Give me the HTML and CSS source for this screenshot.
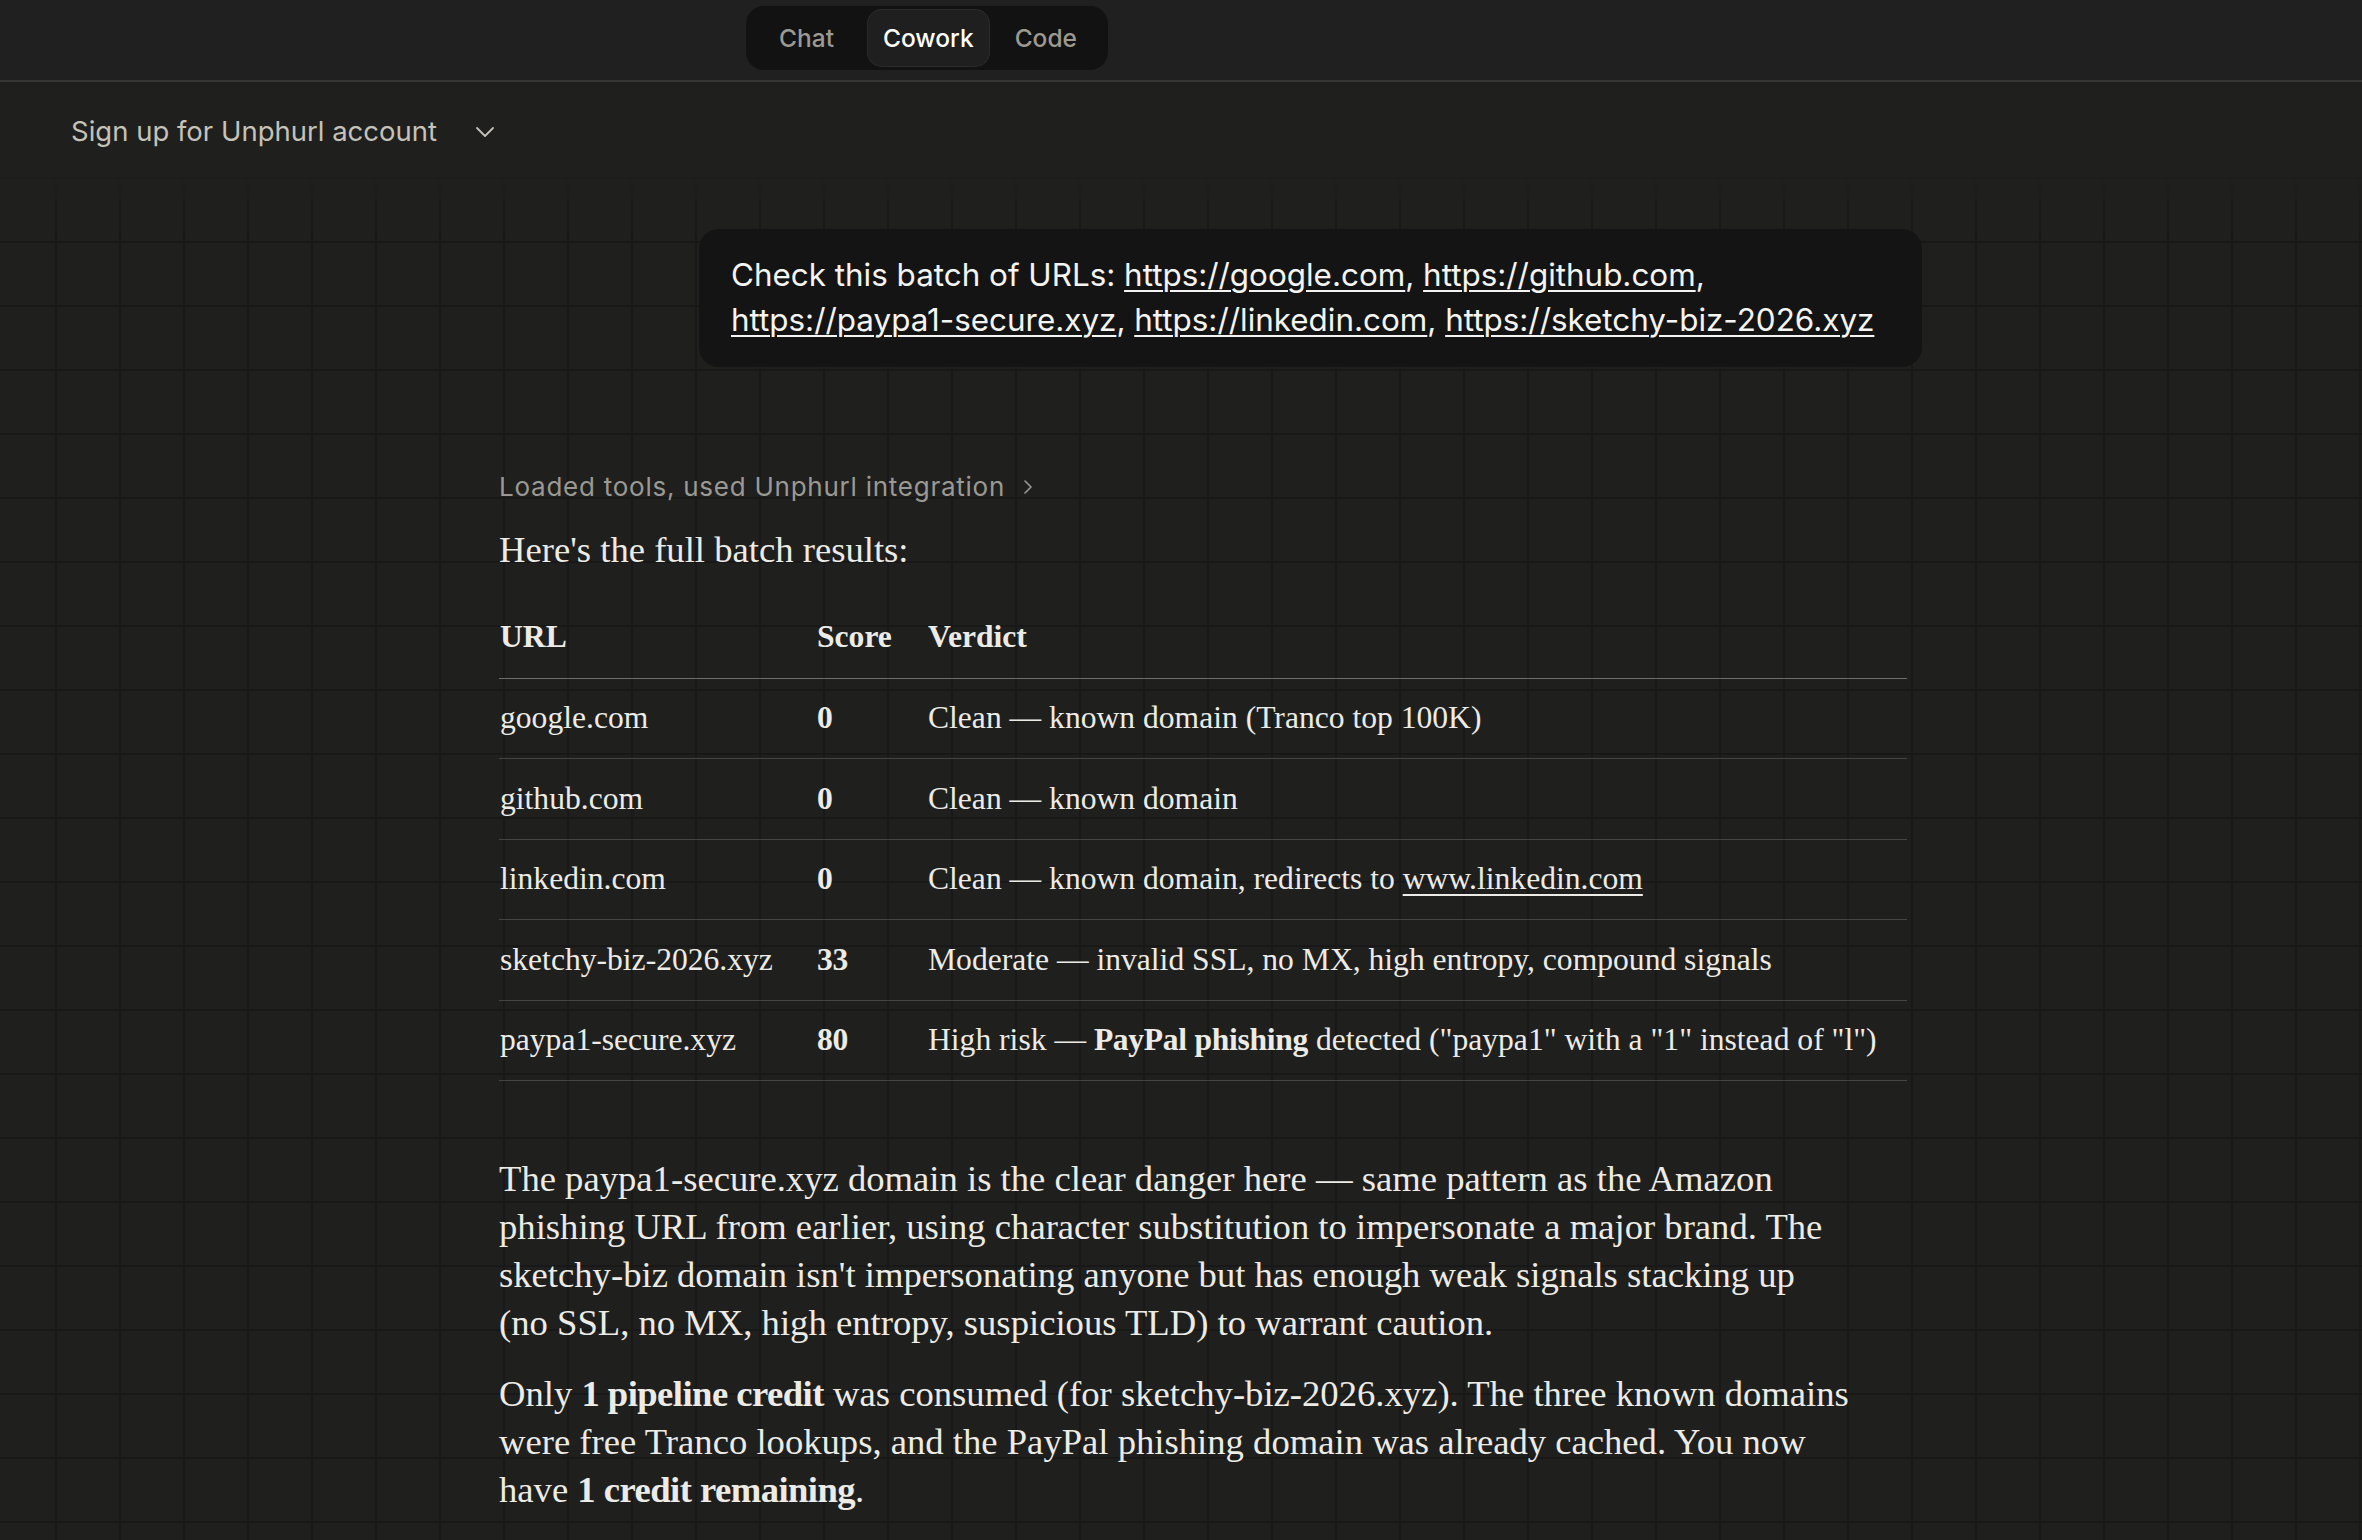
FILE: index.html
```html
<!DOCTYPE html>
<html lang="en">
<head>
<meta charset="utf-8">
<title>Sign up for Unphurl account</title>
<link rel="stylesheet" href="styles.css">
</head>
<body>
<header class="topbar">
  <nav class="mode-switch">
    <span class="mode">Chat</span>
    <span class="mode is-active">Cowork</span>
    <span class="mode">Code</span>
  </nav>
</header>

<main class="canvas">
  <div class="title-row">
    <span class="title">Sign up for Unphurl account</span>
    <svg class="title-chevron" width="20" height="12" viewBox="0 0 20 12" fill="none" stroke="currentColor" stroke-width="1.8" stroke-linecap="round" stroke-linejoin="round"><path d="M2 2l8 8 8-8"/></svg>
  </div>

  <section class="thread">
    <div class="user-msg">
      <p>Check this batch of URLs: <a href="#">https://google.com</a>, <a href="#">https://github.com</a>, <a href="#">https://paypa1-secure.xyz</a>, <a href="#">https://linkedin.com</a>, <a href="#">https://sketchy-biz-2026.xyz</a></p>
    </div>

    <div class="reply">
      <div class="tool-summary">
        <span>Loaded tools, used Unphurl integration</span>
        <svg width="10" height="16" viewBox="0 0 10 16" fill="none" stroke="currentColor" stroke-width="1.6" stroke-linecap="round" stroke-linejoin="round"><path d="M2 2l6 6-6 6"/></svg>
      </div>

      <p class="reply-text">Here's the full batch results:</p>

      <table class="results">
        <colgroup>
          <col class="col-url">
          <col class="col-score">
          <col>
        </colgroup>
        <thead>
          <tr><th>URL</th><th>Score</th><th>Verdict</th></tr>
        </thead>
        <tbody>
          <tr><td>google.com</td><td><strong>0</strong></td><td>Clean — known domain (Tranco top 100K)</td></tr>
          <tr><td>github.com</td><td><strong>0</strong></td><td>Clean — known domain</td></tr>
          <tr><td>linkedin.com</td><td><strong>0</strong></td><td>Clean — known domain, redirects to <a href="#">www.linkedin.com</a></td></tr>
          <tr><td>sketchy-biz-2026.xyz</td><td><strong>33</strong></td><td>Moderate — invalid SSL, no MX, high entropy, compound signals</td></tr>
          <tr><td>paypa1-secure.xyz</td><td><strong>80</strong></td><td>High risk — <strong>PayPal phishing</strong> detected ("paypa1" with a "1" instead of "l")</td></tr>
        </tbody>
      </table>

      <p class="reply-text summary">The paypa1-secure.xyz domain is the clear danger here — same pattern as the Amazon phishing URL from earlier, using character substitution to impersonate a major brand. The sketchy-biz domain isn't impersonating anyone but has enough weak signals stacking up (no SSL, no MX, high entropy, suspicious TLD) to warrant caution.</p>

      <p class="reply-text">Only <strong>1 pipeline credit</strong> was consumed (for sketchy-biz-2026.xyz). The three known domains were free Tranco lookups, and the PayPal phishing domain was already cached. You now have <strong>1 credit remaining</strong>.</p>
    </div>
  </section>
</main>
</body>
</html>
```

FILE: styles.css
```css
* { box-sizing: border-box; }

html, body {
  margin: 0;
  padding: 0;
  background: #1f1f1e;
  overflow: hidden;
}

body {
  font-family: Inter, "Noto Sans", sans-serif;
  color: #ecebe6;
}

/* ---------- top bar with the mode switch ---------- */
.topbar {
  height: 82px;
  background: #202020;
  border-bottom: 2px solid #363635;
  padding: 6px 0 0 746px;
}

.mode-switch {
  display: inline-flex;
  gap: 3px;
  padding: 3px;
  background: #121212;
  border-radius: 18px;
}

.mode {
  min-width: 112px;
  height: 58px;
  padding: 0 16px;
  display: flex;
  align-items: center;
  justify-content: center;
  font-size: 24.5px;
  font-weight: 500;
  color: #9c9a93;
  border-radius: 15px;
}

.mode:first-child { min-width: 115px; }

.mode.is-active {
  min-width: 120px;
  color: #ffffff;
  background: #1f1f1f;
  box-shadow: inset 0 0 0 1px #2a2a2a;
}

.mode:last-child {
  justify-content: flex-start;
  padding-left: 22px;
}

/* ---------- canvas with faint grid ---------- */
.canvas {
  position: relative;
  min-height: calc(100vh - 82px);
}

.canvas::before {
  content: "";
  position: absolute;
  inset: 0;
  background-image:
    linear-gradient(to right, #181818 2px, transparent 2px),
    linear-gradient(to bottom, #181818 2px, transparent 2px);
  background-size: 64px 64px;
  background-position: 55px 2px;
  -webkit-mask-image: linear-gradient(to bottom, transparent 60px, #000 135px);
  mask-image: linear-gradient(to bottom, transparent 60px, #000 135px);
  pointer-events: none;
}

.title-row,
.thread {
  position: relative;
  z-index: 1;
}

.title-row {
  display: flex;
  align-items: center;
  gap: 38px;
  height: 40px;
  margin-top: 29px;
  padding-left: 71px;
  color: #c4c2b9;
}

.title {
  font-size: 27.5px;
  line-height: 40px;
}

.title-chevron { margin-top: 2px; }

/* ---------- conversation column ---------- */
.thread {
  width: 1423px;
  margin: 78px 0 0 499px;
  display: flex;
  flex-direction: column;
}

.user-msg {
  align-self: flex-end;
  width: 1223px;
  background: #141414;
  border-radius: 20px;
  padding: 24px 32px;
}

.user-msg p {
  margin: 0;
  font-size: 31.4px;
  line-height: 45px;
  color: #f4f4f2;
}

.user-msg a {
  color: inherit;
  text-decoration: underline;
  text-underline-offset: 4px;
  text-decoration-thickness: 2px;
}

.reply {
  margin-top: 101px;
  width: 1408px;
}

.tool-summary {
  display: flex;
  align-items: center;
  gap: 18px;
  height: 36px;
  font-size: 26px;
  letter-spacing: 0.75px;
  color: #9b9993;
}

.tool-summary svg { margin-top: 1px; }

.reply-text {
  margin: 22px 0 0;
  font-family: "Liberation Serif", "Times New Roman", serif;
  font-size: 36.65px;
  line-height: 48px;
  color: #ecebe6;
  width: 1351px;
}

.reply-text.summary { margin-top: 74px; }
.reply-text + .reply-text { margin-top: 23px; }

.reply-text strong {
  font-weight: 700;
  letter-spacing: -0.55px;
}

/* ---------- results table ---------- */
.results {
  margin-top: 22px;
  width: 1408px;
  border-collapse: collapse;
  table-layout: fixed;
  font-family: "Liberation Serif", "Times New Roman", serif;
  font-size: 31.6px;
  color: #ecebe6;
}

.col-url { width: 317px; }
.col-score { width: 111px; }

.results th {
  text-align: left;
  font-weight: 700;
  height: 82px;
  padding: 0 0 0 1px;
  border-bottom: 1px solid #6e6e6b;
}

.results td {
  height: 80.5px;
  padding: 0 0 0 1px;
  border-bottom: 1px solid #454543;
  white-space: nowrap;
}

.results td strong { letter-spacing: -0.3px; }

.results a {
  color: inherit;
  text-decoration: underline;
  text-underline-offset: 5px;
  text-decoration-thickness: 2px;
}
```
